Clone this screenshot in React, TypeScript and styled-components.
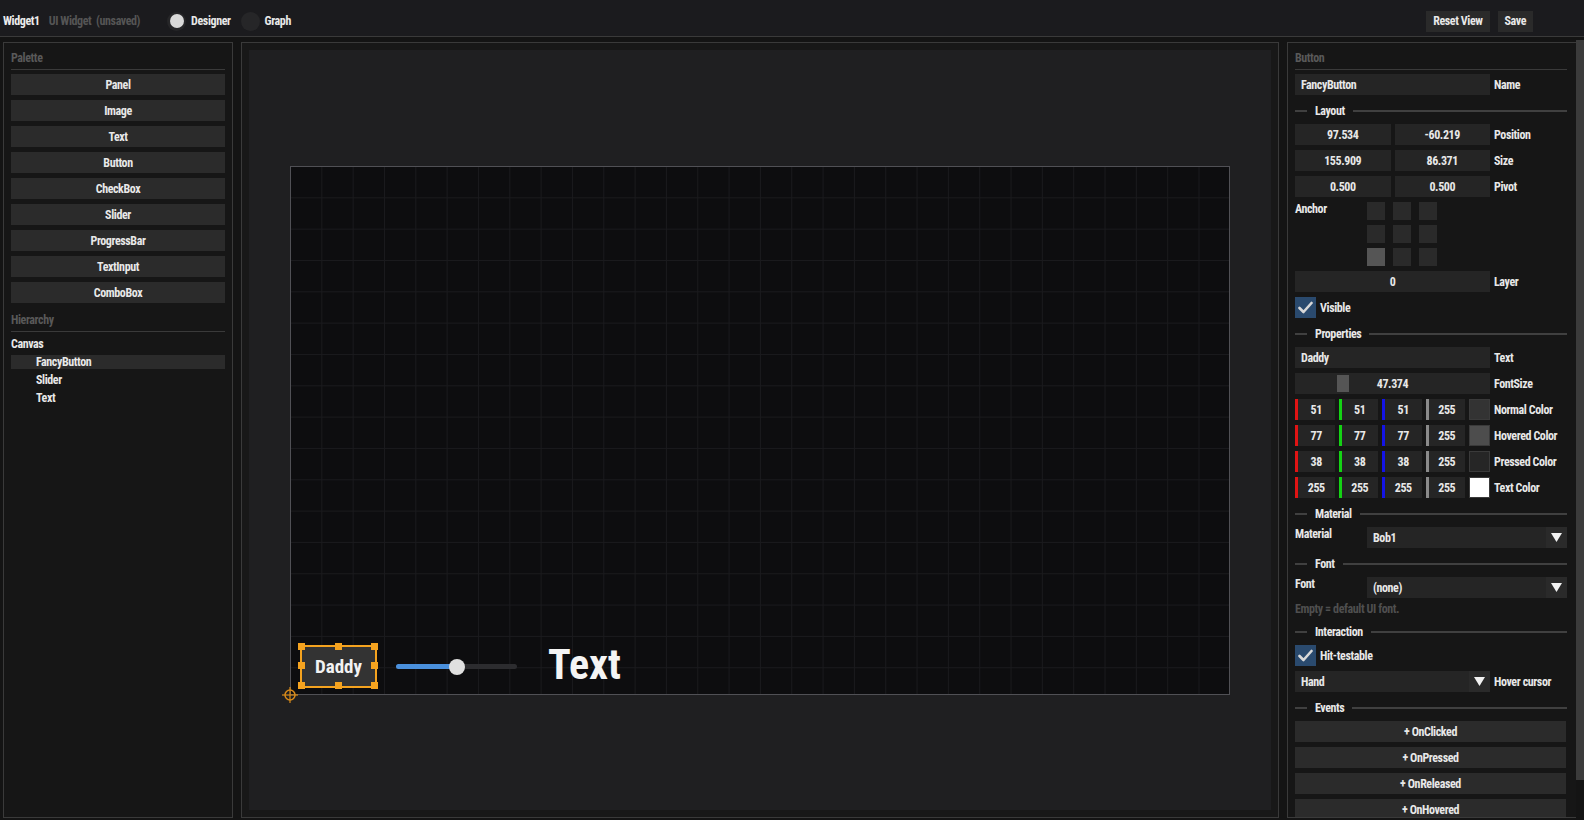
import React from "react";
import styled, { createGlobalStyle } from "styled-components";

const GlobalStyle = createGlobalStyle`
  html, body {
    margin: 0;
    padding: 0;
    background: #141414;
    overflow: hidden;
  }
  body {
    font-family: Roboto, "Liberation Sans", sans-serif;
    font-weight: 700;
    font-size: 12px;
    letter-spacing: -0.4px;
    font-stretch: 75%;
    color: #e8e8e8;
  }
  * { box-sizing: border-box; }
`;

const Screen = styled.div`
  width: 1584px;
  height: 820px;
  display: flex;
  flex-direction: column;
`;

/* ---------- top bar ---------- */

const TopBar = styled.header`
  height: 37px;
  flex: none;
  display: flex;
  align-items: center;
  padding: 6px 0 0 3px;
  background: #1b1b1e;
  border-bottom: 1px solid #3a3a3a;
`;

const DocTitle = styled.span`
  color: #ececec;
`;

const DocMeta = styled.span`
  margin-left: 9px;
  color: #555;
  white-space: pre;
`;

const ModeSwitch = styled.div`
  display: flex;
  align-items: center;
  gap: 10px;
  margin-left: 27px;
`;

const ModeOption = styled.label`
  display: flex;
  align-items: center;
  gap: 5px;
`;

const ModeDot = styled.span<{ $on?: boolean }>`
  width: 19px;
  height: 19px;
  border-radius: 50%;
  background: #262628;
  display: flex;
  align-items: center;
  justify-content: center;
  &::after {
    content: "";
    width: 14px;
    height: 14px;
    border-radius: 50%;
    background: ${(p) => (p.$on ? "#d9d9d9" : "transparent")};
  }
`;

const TopActions = styled.div`
  margin-left: auto;
  margin-right: 51px;
  display: flex;
  gap: 8px;
`;

const TopButton = styled.button`
  height: 21px;
  padding: 0 7px;
  border: none;
  background: #2a2a2a;
  color: #e8e8e8;
  font: inherit;
  font-stretch: inherit;
  letter-spacing: inherit;
`;

/* ---------- main layout ---------- */

const Main = styled.div`
  flex: 1;
  min-height: 0;
  display: flex;
  gap: 8px;
  padding: 5px 0 2px 3px;
`;

const SidePanel = styled.aside`
  width: 230px;
  flex: none;
  background: #161616;
  border: 1px solid #3a3a3a;
  padding: 0 7px;
  overflow: hidden;
  display: flex;
  flex-direction: column;
`;

const Dock = styled.div`
  flex: 1;
  min-width: 0;
  display: flex;
`;

const Inspector = styled.aside`
  flex: 1;
  min-width: 0;
  background: #161616;
  border: 1px solid #3a3a3a;
  border-right: none;
  padding: 0 9px 0 7px;
  overflow: hidden;
  display: flex;
  flex-direction: column;
`;

const PanelHeader = styled.div<{ $gap?: number }>`
  height: 27px;
  flex: none;
  display: flex;
  align-items: center;
  padding-top: 3px;
  margin-top: ${(p) => p.$gap ?? 0}px;
  color: #595959;
  border-bottom: 1px solid #3a3a3a;
`;

const PaletteList = styled.div`
  display: flex;
  flex-direction: column;
  gap: 5px;
  margin-top: 4px;
`;

const PaletteButton = styled.div`
  height: 21px;
  background: #2b2b2b;
  display: flex;
  align-items: center;
  justify-content: center;
`;

const Tree = styled.div`
  display: flex;
  flex-direction: column;
  gap: 4px;
  margin-top: 5px;
`;

const TreeItem = styled.div<{ $depth: number; $selected?: boolean }>`
  height: 14px;
  display: flex;
  align-items: center;
  padding-left: ${(p) => p.$depth * 25}px;
  background: ${(p) => (p.$selected ? "#2b2b2b" : "transparent")};
`;

/* ---------- designer viewport ---------- */

const Stage = styled.section`
  width: 1038px;
  flex: none;
  background: #181818;
  border: 1px solid #3a3a3a;
  padding: 7px;
  display: flex;
`;

const Viewport = styled.div`
  flex: 1;
  background: #1f1f21;
  display: flex;
  align-items: center;
  justify-content: center;
`;

const CanvasFrame = styled.div`
  position: relative;
  width: 940px;
  height: 529px;
  border: 1px solid #505055;
  background-color: #0d0d0f;
  background-image: linear-gradient(to right, #1a1a1d 1px, transparent 1px),
    linear-gradient(to bottom, #1a1a1d 1px, transparent 1px);
  background-size: 31.33px 31.33px;
  background-position: -1px -1px;
`;

const SelectionBox = styled.div`
  position: absolute;
  left: 9px;
  top: 478px;
  width: 77px;
  height: 43px;
  border: 2px solid #f5a31f;
  background: #333;
  display: flex;
  align-items: center;
  justify-content: center;
  font-size: 19px;
  letter-spacing: 0;
  color: #f2f2f2;
`;

const Handle = styled.span<{ $x: number; $y: number }>`
  position: absolute;
  width: 7px;
  height: 7px;
  background: #f5a31f;
  left: calc(${(p) => p.$x}% - 4px);
  top: calc(${(p) => p.$y}% - 4px);
`;

const SliderWidget = styled.div`
  position: absolute;
  left: 105px;
  top: 492px;
  width: 121px;
  height: 16px;
  display: flex;
  align-items: center;
`;

const SliderTrack = styled.div`
  position: relative;
  width: 100%;
  height: 5px;
  border-radius: 3px;
  background: #2c2c2f;
`;

const SliderFill = styled.div`
  height: 100%;
  border-radius: 3px;
  background: #4a90dd;
`;

const SliderThumb = styled.span`
  position: absolute;
  top: 50%;
  width: 16px;
  height: 16px;
  margin: -8px 0 0 -8px;
  border-radius: 50%;
  background: #e0e0e0;
`;

const CanvasLabel = styled.div`
  position: absolute;
  left: 257px;
  top: 477px;
  font-size: 42px;
  line-height: 42px;
  letter-spacing: 0;
  color: #f4f4f4;
`;

const PivotMark = styled.svg`
  position: absolute;
  left: -10px;
  top: 519px;
`;

/* ---------- inspector ---------- */

const Form = styled.div`
  display: flex;
  flex-direction: column;
  gap: 5px;
  margin-top: 4px;
`;

const Row = styled.div`
  height: 21px;
  flex: none;
  display: flex;
  align-items: center;
  gap: 4px;
`;

const Controls = styled.div`
  width: 195px;
  height: 100%;
  flex: none;
  display: flex;
  gap: 4px;
`;

const Field = styled.div<{ $align?: "left" | "center" }>`
  flex: 1;
  min-width: 0;
  height: 21px;
  background: #252525;
  display: flex;
  align-items: center;
  justify-content: ${(p) => (p.$align === "left" ? "flex-start" : "center")};
  padding: 0 6px;
`;

const Label = styled.span`
  color: #e8e8e8;
  white-space: nowrap;
`;

const SectionBar = styled.div`
  height: 19px;
  flex: none;
  display: flex;
  align-items: center;
  gap: 8px;
  padding-top: 3px;
  &::before,
  &::after {
    content: "";
    height: 2px;
    background: #404040;
  }
  &::before {
    width: 12px;
  }
  &::after {
    flex: 1;
  }
`;

const AnchorRow = styled.div`
  height: 64px;
  flex: none;
  display: flex;
`;

const SideLabel = styled.span`
  width: 72px;
  flex: none;
  line-height: 14px;
`;

const AnchorGrid = styled.div`
  display: grid;
  grid-template-columns: repeat(3, 18px);
  grid-auto-rows: 18px;
  column-gap: 8px;
  row-gap: 5px;
`;

const AnchorCell = styled.span<{ $active?: boolean }>`
  background: ${(p) => (p.$active ? "#555" : "#2a2a2a")};
`;

const CheckBox = styled.span`
  width: 21px;
  height: 21px;
  background: #2a4a6e;
  display: flex;
  align-items: center;
  justify-content: center;
`;

const SliderField = styled(Field)`
  position: relative;
`;

const SliderGrab = styled.span`
  position: absolute;
  left: 42px;
  top: 2px;
  width: 12px;
  height: 17px;
  background: #555;
`;

const ChannelGrid = styled.div`
  width: 170px;
  display: grid;
  grid-template-columns: repeat(4, 1fr);
  gap: 4px;
`;

const Channel = styled.div<{ $tint: string }>`
  height: 21px;
  background: #252525;
  border-left: 3px solid ${(p) => p.$tint};
  display: flex;
  align-items: center;
  justify-content: center;
`;

const Swatch = styled.span<{ $fill: string }>`
  width: 21px;
  height: 21px;
  flex: none;
  background: ${(p) => p.$fill};
  border: 1px solid #3a3a3a;
`;

const PickerRow = styled.div`
  height: 21px;
  flex: none;
  display: flex;
  align-items: flex-start;
`;

const Select = styled.div`
  flex: 1;
  height: 21px;
  background: #252525;
  display: flex;
  align-items: center;
`;

const SelectValue = styled.span`
  flex: 1;
  padding-left: 6px;
`;

const SelectArrow = styled.span`
  width: 21px;
  height: 21px;
  background: #2a2a2a;
  display: flex;
  align-items: center;
  justify-content: center;
`;

const Hint = styled.div`
  height: 13px;
  line-height: 13px;
  color: #4f4f4f;
`;

const EventButton = styled.div`
  height: 21px;
  flex: none;
  margin-right: 1px;
  background: #2b2b2b;
  display: flex;
  align-items: center;
  justify-content: center;
`;

const ScrollTrack = styled.div`
  width: 8px;
  flex: none;
  margin-top: -2px;
  display: flex;
  flex-direction: column;
`;

const ScrollThumb = styled.div`
  height: 740px;
  background: #3b3b3b;
`;

/* ---------- small drawings ---------- */

const Tick = () => (
  <svg width="15" height="13" viewBox="0 0 15 13">
    <polyline
      points="1.5,7 5.5,11 13.5,2"
      fill="none"
      stroke="#d8d8d8"
      strokeWidth="2.6"
      strokeLinecap="round"
      strokeLinejoin="round"
    />
  </svg>
);

const DownArrow = () => (
  <svg width="11" height="9" viewBox="0 0 11 9">
    <polygon points="0,0 11,0 5.5,9" fill="#f2f2f2" />
  </svg>
);

const Dropdown = ({ value }: { value: string }) => (
  <Select>
    <SelectValue>{value}</SelectValue>
    <SelectArrow>
      <DownArrow />
    </SelectArrow>
  </Select>
);

const Section = ({ title }: { title: string }) => (
  <SectionBar>
    <Label>{title}</Label>
  </SectionBar>
);

const palette = [
  "Panel",
  "Image",
  "Text",
  "Button",
  "CheckBox",
  "Slider",
  "ProgressBar",
  "TextInput",
  "ComboBox",
];

const colorRows = [
  { name: "Normal Color", v: [51, 51, 51, 255], fill: "#333333" },
  { name: "Hovered Color", v: [77, 77, 77, 255], fill: "#4d4d4d" },
  { name: "Pressed Color", v: [38, 38, 38, 255], fill: "#262626" },
  { name: "Text Color", v: [255, 255, 255, 255], fill: "#ffffff" },
];

const channelTints = ["#e01414", "#14d214", "#1414e6", "#8a8a8a"];

const handles: [number, number][] = [
  [0, 0],
  [50, 0],
  [100, 0],
  [0, 50],
  [100, 50],
  [0, 100],
  [50, 100],
  [100, 100],
];

const events = ["+ OnClicked", "+ OnPressed", "+ OnReleased", "+ OnHovered"];

export default function App() {
  return (
    <Screen>
      <GlobalStyle />
      <TopBar>
        <DocTitle>Widget1</DocTitle>
        <DocMeta>UI Widget  (unsaved)</DocMeta>
        <ModeSwitch>
          <ModeOption>
            <ModeDot $on />
            Designer
          </ModeOption>
          <ModeOption>
            <ModeDot />
            Graph
          </ModeOption>
        </ModeSwitch>
        <TopActions>
          <TopButton>Reset View</TopButton>
          <TopButton>Save</TopButton>
        </TopActions>
      </TopBar>

      <Main>
        <SidePanel>
          <PanelHeader>Palette</PanelHeader>
          <PaletteList>
            {palette.map((p) => (
              <PaletteButton key={p}>{p}</PaletteButton>
            ))}
          </PaletteList>
          <PanelHeader $gap={2}>Hierarchy</PanelHeader>
          <Tree>
            <TreeItem $depth={0}>Canvas</TreeItem>
            <TreeItem $depth={1} $selected>
              FancyButton
            </TreeItem>
            <TreeItem $depth={1}>Slider</TreeItem>
            <TreeItem $depth={1}>Text</TreeItem>
          </Tree>
        </SidePanel>

        <Stage>
          <Viewport>
            <CanvasFrame>
              <SelectionBox>
                Daddy
                {handles.map(([x, y]) => (
                  <Handle key={`${x}-${y}`} $x={x} $y={y} />
                ))}
              </SelectionBox>
              <SliderWidget>
                <SliderTrack>
                  <SliderFill style={{ width: "50%" }} />
                  <SliderThumb style={{ left: "50%" }} />
                </SliderTrack>
              </SliderWidget>
              <CanvasLabel>Text</CanvasLabel>
              <PivotMark width="18" height="18" viewBox="0 0 18 18">
                <circle cx="9" cy="9" r="5" fill="none" stroke="#d88a1a" strokeWidth="1.5" />
                <line x1="9" y1="1" x2="9" y2="17" stroke="#d88a1a" strokeWidth="1.2" />
                <line x1="1" y1="9" x2="17" y2="9" stroke="#d88a1a" strokeWidth="1.2" />
              </PivotMark>
            </CanvasFrame>
          </Viewport>
        </Stage>

        <Dock>
          <Inspector>
            <PanelHeader>Button</PanelHeader>
            <Form>
              <Row>
                <Controls>
                  <Field $align="left">FancyButton</Field>
                </Controls>
                <Label>Name</Label>
              </Row>
              <Section title="Layout" />
              <Row>
                <Controls>
                  <Field>97.534</Field>
                  <Field>-60.219</Field>
                </Controls>
                <Label>Position</Label>
              </Row>
              <Row>
                <Controls>
                  <Field>155.909</Field>
                  <Field>86.371</Field>
                </Controls>
                <Label>Size</Label>
              </Row>
              <Row>
                <Controls>
                  <Field>0.500</Field>
                  <Field>0.500</Field>
                </Controls>
                <Label>Pivot</Label>
              </Row>
              <AnchorRow>
                <SideLabel>Anchor</SideLabel>
                <AnchorGrid>
                  {Array.from({ length: 9 }, (_, i) => (
                    <AnchorCell key={i} $active={i === 6} />
                  ))}
                </AnchorGrid>
              </AnchorRow>
              <Row>
                <Controls>
                  <Field>0</Field>
                </Controls>
                <Label>Layer</Label>
              </Row>
              <Row>
                <CheckBox>
                  <Tick />
                </CheckBox>
                <Label>Visible</Label>
              </Row>
              <Section title="Properties" />
              <Row>
                <Controls>
                  <Field $align="left">Daddy</Field>
                </Controls>
                <Label>Text</Label>
              </Row>
              <Row>
                <Controls>
                  <SliderField>
                    <SliderGrab />
                    47.374
                  </SliderField>
                </Controls>
                <Label>FontSize</Label>
              </Row>
              {colorRows.map((c) => (
                <Row key={c.name}>
                  <Controls>
                    <ChannelGrid>
                      {c.v.map((n, i) => (
                        <Channel key={i} $tint={channelTints[i]}>
                          {n}
                        </Channel>
                      ))}
                    </ChannelGrid>
                    <Swatch $fill={c.fill} />
                  </Controls>
                  <Label>{c.name}</Label>
                </Row>
              ))}
              <Section title="Material" />
              <PickerRow>
                <SideLabel>Material</SideLabel>
                <Dropdown value="Bob1" />
              </PickerRow>
              <Section title="Font" />
              <PickerRow>
                <SideLabel>Font</SideLabel>
                <Dropdown value="(none)" />
              </PickerRow>
              <Hint>Empty = default UI font.</Hint>
              <Section title="Interaction" />
              <Row>
                <CheckBox>
                  <Tick />
                </CheckBox>
                <Label>Hit-testable</Label>
              </Row>
              <Row>
                <Controls>
                  <Dropdown value="Hand" />
                </Controls>
                <Label>Hover cursor</Label>
              </Row>
              <Section title="Events" />
              {events.map((e) => (
                <EventButton key={e}>{e}</EventButton>
              ))}
            </Form>
          </Inspector>
          <ScrollTrack>
            <ScrollThumb />
          </ScrollTrack>
        </Dock>
      </Main>
    </Screen>
  );
}
